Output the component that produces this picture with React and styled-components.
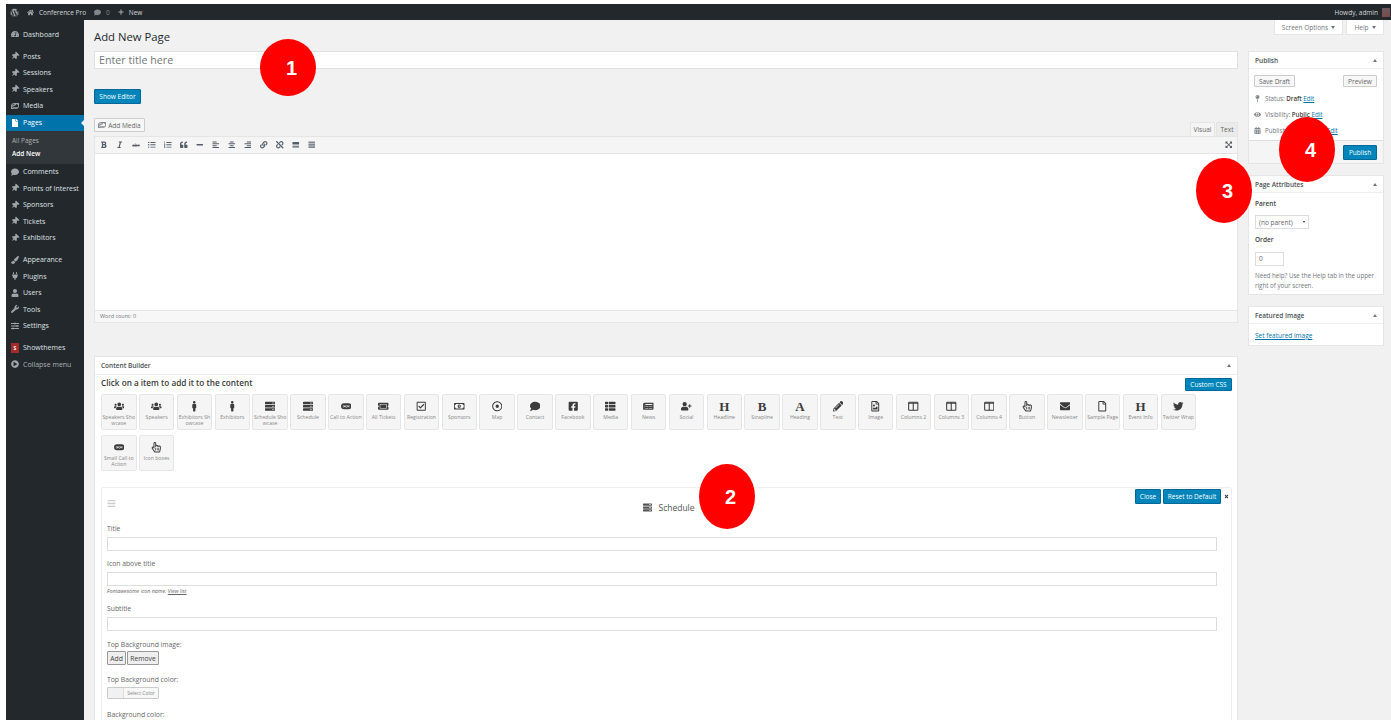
import React from 'react';
import styled, { createGlobalStyle } from 'styled-components';
import {
  FaAlignCenter, FaAlignLeft, FaAlignRight, FaBold, FaCalendarAlt, FaComment, FaEnvelope, FaExpandArrowsAlt,
  FaEye, FaFacebookSquare, FaHome, FaImages, FaItalic, FaLink, FaListOl, FaListUl, FaMale, FaMapPin, FaMinus,
  FaNewspaper, FaPaintBrush, FaPencilAlt, FaPlug, FaPlus, FaQuoteLeft, FaRegCheckSquare, FaRegDotCircle, FaRegFile,
  FaRegFileImage, FaRegHandPointer, FaRegMoneyBillAlt, FaServer, FaSlidersH, FaTachometerAlt,
  FaThList, FaThumbtack, FaTicketAlt, FaTwitter, FaUnlink, FaUser, FaUserPlus, FaUsers, FaWordpress, FaWrench, FaFile,
  FaPlayCircle, FaBars, FaTimes,
} from 'react-icons/fa';

const GlobalStyle = createGlobalStyle`
  html, body {
    margin: 0;
    background: #fff;
    overflow: hidden;
  }
  * {
    box-sizing: border-box;
  }
`;

const Page = styled.div`
  position: relative;
  width: 1391px;
  height: 720px;
  padding: 4px 0 0 6px;
  overflow: hidden;
  display: flex;
  flex-direction: column;
  background: #fff;
  font-family: 'Open Sans', sans-serif;
  color: #444;
`;

const AdminBar = styled.div`
  flex: 0 0 16px;
  display: flex;
  align-items: center;
  padding: 0 1px 0 4px;
  background: #23282d;
  color: #d5d7d9;
  font-size: 6.5px;
`;

const BarItem = styled.span`
  display: inline-flex;
  align-items: center;
  gap: ${p => (p.$tight ? 3 : 5)}px;
  margin-left: ${p => (p.$end ? 'auto' : `${p.$gap || 0}px`)};
  color: ${p => p.$color || 'inherit'};
`;

const Avatar = styled.span`
  width: 8px;
  height: 9px;
  margin-left: -1px;
  background: linear-gradient(#6b5a60, #7d4a4f);
`;

const Body = styled.div`
  flex: 1;
  display: flex;
  min-height: 0;
`;

const Sidebar = styled.nav`
  flex: 0 0 78px;
  padding-top: 6px;
  background: #23282d;
`;

const MenuGroup = styled.div`
  margin-bottom: ${p => p.$gap || 0}px;
`;

const MenuRow = styled.div`
  position: relative;
  height: 16.5px;
  display: flex;
  align-items: center;
  padding-left: 5px;
  gap: 4px;
  font-size: 7px;
  color: ${p => (p.$active ? '#fff' : p.$dim ? '#aab0b5' : '#dfe1e2')};
  background: ${p => (p.$active ? '#0073aa' : 'transparent')};

  svg {
    flex: 0 0 8px;
    width: 8px;
    height: 8px;
    color: ${p => (p.$active ? '#fff' : '#a0a5aa')};
  }
`;

const PinIcon = styled(FaThumbtack)`
  transform: rotate(45deg);
`;

const ActiveNotch = styled.span`
  position: absolute;
  right: 0;
  top: 5px;
  border: 3px solid transparent;
  border-right-color: #f1f1f1;
  border-left-width: 0;
`;

const SubMenu = styled.div`
  height: 32.5px;
  padding: 3px 0 0 6px;
  background: #32373c;
  font-size: 6.5px;
  line-height: 13px;
`;

const SubLink = styled.div`
  color: ${p => (p.$current ? '#fff' : '#aeb2b6')};
  font-weight: ${p => (p.$current ? 600 : 400)};
`;

const BrandMark = styled.span`
  flex: 0 0 8px;
  width: 8px;
  height: 10px;
  background: #a52a2a;
  color: #fff;
  font-size: 5px;
  font-weight: 700;
  text-align: center;
  line-height: 10px;
`;

const Content = styled.main`
  position: relative;
  flex: 1;
  display: flex;
  gap: 10px;
  padding: 9px 7px 0 10px;
  background: #f1f1f1;
  min-width: 0;
`;

const ScreenMeta = styled.div`
  position: absolute;
  top: 0;
  right: 7px;
  display: flex;
  gap: 3px;
`;

const MetaTab = styled.div`
  width: ${p => p.$width}px;
  height: 15px;
  display: flex;
  align-items: center;
  justify-content: center;
  gap: 3px;
  background: #fff;
  border: 1px solid #e5e5e5;
  border-top: 0;
  color: #72777c;
  font-size: 6.5px;

  &::after {
    content: '';
    border: 2px solid transparent;
    border-top: 3px solid #72777c;
    border-bottom: 0;
  }
`;

const MainColumn = styled.div`
  flex: 0 0 1144px;
  width: 1144px;
`;

const SideColumn = styled.aside`
  flex: 0 0 136px;
  padding-top: 22px;
`;

const Heading = styled.h1`
  margin: 0 0 6px;
  font-size: 11.3px;
  line-height: 16px;
  font-weight: 400;
  color: #23282d;
`;

const TitleInput = styled.div`
  height: 18px;
  padding-left: 4px;
  background: #fff;
  border: 1px solid #e0e0e0;
  font-size: 10.7px;
  line-height: 16px;
  color: #72777c;
`;

const PrimaryButton = styled.div`
  display: inline-flex;
  align-items: center;
  justify-content: center;
  width: ${p => p.$width}px;
  height: ${p => p.$height || 15}px;
  margin-top: ${p => p.$top || 0}px;
  background: #0085ba;
  border: 1px solid #006799;
  border-radius: 1px;
  color: #fff;
  font-size: 6.5px;
  white-space: nowrap;
`;

const SoftButton = styled.div`
  display: inline-flex;
  align-items: center;
  justify-content: center;
  gap: 2px;
  width: ${p => p.$width}px;
  height: ${p => p.$height || 14}px;
  background: #f7f7f7;
  border: 1px solid #ccc;
  border-radius: 1px;
  color: #666;
  font-size: 6.5px;

  svg {
    width: 8px;
    height: 8px;
    color: #82878c;
  }
`;

const MediaRow = styled.div`
  height: 18px;
  margin-top: 14px;
  display: flex;
  justify-content: space-between;
`;

const EditorTabs = styled.div`
  display: flex;
  align-items: flex-end;
  gap: 1px;
`;

const EditorTab = styled.div`
  width: ${p => p.$width}px;
  height: 14px;
  display: flex;
  align-items: center;
  justify-content: center;
  background: ${p => (p.$active ? '#f5f5f5' : '#ebebeb')};
  border: 1px solid #e5e5e5;
  border-bottom: 0;
  color: #666;
  font-size: 6.5px;
`;

const EditorPanel = styled.div`
  height: 187px;
  display: flex;
  flex-direction: column;
  border: 1px solid #e5e5e5;
  background: #fff;
`;

const Toolbar = styled.div`
  flex: 0 0 17px;
  display: flex;
  align-items: center;
  padding: 0 0 0 1px;
  background: #f5f5f5;
  border-bottom: 1px solid #e5e5e5;
`;

const ToolButton = styled.span`
  flex: 0 0 16px;
  display: flex;
  justify-content: center;
  margin-left: ${p => (p.$push ? 'auto' : 0)};
  color: #555d66;
  font-size: 4.5px;
  line-height: 7px;

  svg {
    width: 7.5px;
    height: 7.5px;
  }
`;

const EditorArea = styled.div`
  flex: 1;
`;

const WordCount = styled.div`
  flex: 0 0 12px;
  padding-left: 5px;
  background: #f7f7f7;
  border-top: 1px solid #e5e5e5;
  color: #72777c;
  font-size: 5.5px;
  line-height: 11px;
`;

const Builder = styled.section`
  margin-top: 33px;
  height: 420px;
  background: #fff;
  border: 1px solid #e5e5e5;
`;

const PanelHeader = styled.div`
  height: ${p => p.$height || 17}px;
  display: flex;
  align-items: center;
  justify-content: space-between;
  padding: 0 6px;
  border-bottom: 1px solid #eee;
  color: #4a4f54;
  font-size: 6.5px;
  font-weight: 600;

  &::after {
    content: '';
    border: 2px solid transparent;
    border-bottom: 3px solid #72777c;
    border-top: 0;
  }
`;

const BuilderBody = styled.div`
  padding: 3px 5px 0 6px;
`;

const PromptRow = styled.div`
  display: flex;
  align-items: center;
  justify-content: space-between;
  height: 13px;
`;

const Prompt = styled.div`
  font-size: 8.2px;
  font-weight: 600;
  color: #3a3a3a;
  position: relative;
  top: -2px;
`;

const Tiles = styled.div`
  display: flex;
  flex-wrap: wrap;
  gap: 5px 2.35px;
  margin-top: 3px;
  height: 77px;
`;

const TileBox = styled.div`
  width: 35.5px;
  height: 36px;
  padding-top: 6px;
  display: flex;
  flex-direction: column;
  align-items: center;
  background: #f5f5f5;
  border: 1px solid #e6e6e6;
  border-radius: 2px;
  color: #888;
  font-size: 5.2px;
  line-height: 5.5px;
  text-align: center;
  word-break: break-all;
`;

const TileIcon = styled.span`
  height: 11px;
  margin-bottom: 3px;
  display: flex;
  align-items: center;
  color: #3c3c3c;
  font-family: 'Liberation Serif', serif;
  font-size: 13px;
  font-weight: 700;

  svg {
    width: 10.5px;
    height: 10.5px;
  }
`;

const Card = styled.div`
  margin-top: 16px;
  height: 240px;
  padding: 0 14px 0 5px;
  border: 1px solid #eee;
  border-radius: 2px;
  background: #fff;
`;

const CardHeader = styled.div`
  height: 36px;
  margin-right: -14px;
  display: grid;
  grid-template-columns: 1fr auto 1fr;
`;

const DragHandle = styled.span`
  padding-top: 3px;
  color: #ccc;

  svg {
    width: 9px;
    height: 9px;
  }
`;

const CardTitle = styled.div`
  display: flex;
  align-items: center;
  gap: 6px;
  padding-top: 2px;
  color: #555;
  font-size: 8.5px;

  svg {
    width: 9px;
    height: 9px;
    color: #555;
  }
`;

const CardActions = styled.div`
  display: flex;
  justify-content: flex-end;
  gap: 2px;
  padding: 1px 2px 0 0;
  color: #333;

  svg {
    width: 5px;
    height: 5px;
    margin: 5px 0 0 1px;
  }
`;

const FieldLabel = styled.div`
  height: 10px;
  margin-top: ${p => p.$top || 0}px;
  color: #666;
  font-size: 6.8px;
  line-height: 10px;
`;

const FieldInput = styled.div`
  height: 14px;
  margin-top: 3px;
  background: #fff;
  border: 1px solid #ddd;
`;

const FieldNote = styled.div`
  height: 10px;
  color: #666;
  font-size: 5.3px;
  font-style: italic;
  line-height: 10px;

  a {
    color: inherit;
  }
`;

const FieldButtons = styled.div`
  display: flex;
  gap: 1px;
  margin-top: 1px;
`;

const GreyButton = styled.div`
  width: ${p => p.$width}px;
  height: 14px;
  display: flex;
  align-items: center;
  justify-content: center;
  background: #eee;
  border: 1px solid #999;
  border-radius: 1px;
  color: #444;
  font-size: 6.8px;
`;

const ColorPicker = styled.div`
  display: flex;
  width: 52px;
  height: 12px;
  margin-top: 2px;
  border: 1px solid #ccc;
  border-radius: 1px;
  background: #f7f7f7;
  color: #888;
  font-size: 5px;
  line-height: 10px;
`;

const ColorSwatch = styled.span`
  flex: 0 0 16px;
  background: #f1f1f1;
  border-right: 1px solid #ddd;
`;

const ColorLabel = styled.span`
  flex: 1;
  text-align: center;
`;

const SidePanel = styled.section`
  margin-bottom: 11px;
  background: #fff;
  border: 1px solid #e5e5e5;
`;

const PanelBody = styled.div`
  padding: ${p => p.$padding || '6px'};
`;

const PublishButtons = styled.div`
  display: flex;
  justify-content: space-between;
  margin-bottom: 3px;
`;

const StatusRow = styled.div`
  height: 16px;
  display: flex;
  align-items: center;
  gap: 4px;
  color: #72777c;
  font-size: 6.2px;

  svg {
    flex: 0 0 7px;
    width: 7px;
    height: 7px;
    color: #82878c;
  }

  b {
    font-weight: 600;
    color: #444;
  }
`;

const EditLink = styled.a`
  color: #0073aa;
  text-decoration: underline;
`;

const ImageLink = styled(EditLink)`
  display: block;
  font-size: 6.5px;
  line-height: 10px;
`;

const PublishFooter = styled.div`
  height: 23px;
  display: flex;
  justify-content: flex-end;
  align-items: center;
  padding-right: 6px;
  background: #f5f5f5;
  border-top: 1px solid #ddd;
`;

const AttrLabel = styled.div`
  height: 10px;
  margin-top: ${p => p.$top || 0}px;
  color: #444;
  font-size: 6.5px;
  font-weight: 600;
  line-height: 10px;
`;

const SelectBox = styled.div`
  width: 54px;
  height: 14px;
  margin-top: 6px;
  display: flex;
  align-items: center;
  justify-content: space-between;
  padding: 0 3px;
  background: #fff;
  border: 1px solid #ddd;
  color: #666;
  font-size: 6.5px;

  &::after {
    content: '';
    border: 1.5px solid transparent;
    border-top: 2px solid #333;
    border-bottom: 0;
  }
`;

const NumberBox = styled.div`
  width: 29px;
  height: 14px;
  margin-top: 7px;
  padding-left: 3px;
  background: #fff;
  border: 1px solid #ddd;
  color: #666;
  font-size: 6.5px;
  line-height: 12px;
`;

const HelpText = styled.p`
  margin: 5px 0 0;
  color: #72777c;
  font-size: 6.2px;
  line-height: 10px;
`;

const Marker = styled.div`
  position: absolute;
  left: ${p => p.$x}px;
  top: ${p => p.$y}px;
  width: ${p => p.$w}px;
  height: ${p => p.$h}px;
  padding: 2px 0 0 7px;
  display: flex;
  align-items: center;
  justify-content: center;
  border-radius: 50%;
  background: #ff0000;
  color: #fff;
  font-family: 'Liberation Sans', sans-serif;
  font-size: 20px;
  font-weight: 700;
`;

const RingsIcon = () => (
  <svg viewBox="0 0 24 16" fill="none" stroke="currentColor" strokeWidth="4">
    <rect x="2" y="3" width="20" height="10" rx="5" />
    <circle cx="9" cy="8" r="3" strokeWidth="2" />
    <circle cx="16" cy="8" r="3" strokeWidth="2" />
  </svg>
);

const ColumnsIcon = () => (
  <svg viewBox="0 0 16 16" fill="none" stroke="currentColor" strokeWidth="1.6">
    <rect x="1" y="2" width="14" height="12" rx="1" />
    <path d="M8 2v12M1 3.5h14" />
  </svg>
);

const MoreIcon = () => (
  <svg viewBox="0 0 16 16" fill="currentColor">
    <path d="M1 2h14v5H1zM1 8h14v1H1zM1 11h14v3H1z" />
  </svg>
);

const KitchenIcon = () => (
  <svg viewBox="0 0 16 16" fill="#82878c">
    <path d="M1 1h14v4H1zM1 6h14v4H1zM1 11h14v4H1z" />
  </svg>
);

const menuGroups = [
  { gap: 5.5, items: [{ label: 'Dashboard', icon: <FaTachometerAlt /> }] },
  {
    gap: 0.5,
    items: [
      { label: 'Posts', icon: <PinIcon /> },
      { label: 'Sessions', icon: <PinIcon /> },
      { label: 'Speakers', icon: <PinIcon /> },
      { label: 'Media', icon: <FaImages /> },
    ],
  },
];

const menuAfterPages = [
  {
    gap: 5.5,
    items: [
      { label: 'Comments', icon: <FaComment /> },
      { label: 'Points of Interest', icon: <PinIcon /> },
      { label: 'Sponsors', icon: <PinIcon /> },
      { label: 'Tickets', icon: <PinIcon /> },
      { label: 'Exhibitors', icon: <PinIcon /> },
    ],
  },
  {
    gap: 5.5,
    items: [
      { label: 'Appearance', icon: <FaPaintBrush /> },
      { label: 'Plugins', icon: <FaPlug /> },
      { label: 'Users', icon: <FaUser /> },
      { label: 'Tools', icon: <FaWrench /> },
      { label: 'Settings', icon: <FaSlidersH /> },
    ],
  },
];

const tools = [
  <FaBold key="b" />, <FaItalic key="i" />, <s key="s">abc</s>, <FaListUl key="ul" />, <FaListOl key="ol" />,
  <FaQuoteLeft key="q" />, <FaMinus key="hr" />, <FaAlignLeft key="al" />, <FaAlignCenter key="ac" />,
  <FaAlignRight key="ar" />, <FaLink key="l" />, <FaUnlink key="u" />, <MoreIcon key="m" />, <KitchenIcon key="k" />,
];

const tiles = [
  ['Speakers Showcase', <FaUsers />],
  ['Speakers', <FaUsers />],
  ['Exhibitors Showcase', <FaMale />],
  ['Exhibitors', <FaMale />],
  ['Schedule Showcase', <FaServer />],
  ['Schedule', <FaServer />],
  ['Call to Action', <RingsIcon />],
  ['All Tickets', <FaTicketAlt />],
  ['Registration', <FaRegCheckSquare />],
  ['Sponsors', <FaRegMoneyBillAlt />],
  ['Map', <FaRegDotCircle />],
  ['Contact', <FaComment />],
  ['Facebook', <FaFacebookSquare />],
  ['Media', <FaThList />],
  ['News', <FaNewspaper />],
  ['Social', <FaUserPlus />],
  ['Headline', 'H'],
  ['Strapline', 'B'],
  ['Heading', 'A'],
  ['Text', <FaPencilAlt />],
  ['Image', <FaRegFileImage />],
  ['Columns 2', <ColumnsIcon />],
  ['Columns 3', <ColumnsIcon />],
  ['Columns 4', <ColumnsIcon />],
  ['Button', <FaRegHandPointer />],
  ['Newsletter', <FaEnvelope />],
  ['Sample Page', <FaRegFile />],
  ['Event Info', 'H'],
  ['Twitter Wrap', <FaTwitter />],
  ['Small Call to Action', <RingsIcon />],
  ['Icon boxes', <FaRegHandPointer />],
];

const markers = [
  { n: 1, x: 260, y: 39, w: 56, h: 57 },
  { n: 2, x: 699, y: 464, w: 56, h: 65 },
  { n: 3, x: 1196, y: 158, w: 56, h: 65 },
  { n: 4, x: 1279, y: 117, w: 56, h: 65 },
];

const MenuItems = ({ groups }) =>
  groups.map(group => (
    <MenuGroup key={group.items[0].label} $gap={group.gap}>
      {group.items.map(item => (
        <MenuRow key={item.label}>
          {item.icon}
          {item.label}
        </MenuRow>
      ))}
    </MenuGroup>
  ));

const AdminMenu = () => (
  <Sidebar>
    <MenuItems groups={menuGroups} />
    <MenuRow $active>
      <FaFile />
      Pages
      <ActiveNotch />
    </MenuRow>
    <SubMenu>
      <SubLink>All Pages</SubLink>
      <SubLink $current>Add New</SubLink>
    </SubMenu>
    <MenuItems groups={menuAfterPages} />
    <MenuRow>
      <BrandMark>S</BrandMark>
      Showthemes
    </MenuRow>
    <MenuRow $dim>
      <FaPlayCircle />
      Collapse menu
    </MenuRow>
  </Sidebar>
);

const Editor = () => (
  <>
    <MediaRow>
      <SoftButton $width={51}>
        <FaImages />
        Add Media
      </SoftButton>
      <EditorTabs>
        <EditorTab $width={25} $active>Visual</EditorTab>
        <EditorTab $width={22}>Text</EditorTab>
      </EditorTabs>
    </MediaRow>
    <EditorPanel>
      <Toolbar>
        {tools.map(tool => (
          <ToolButton key={tool.key}>{tool}</ToolButton>
        ))}
        <ToolButton $push>
          <FaExpandArrowsAlt />
        </ToolButton>
      </Toolbar>
      <EditorArea />
      <WordCount>Word count: 0</WordCount>
    </EditorPanel>
  </>
);

const ScheduleCard = () => (
  <Card>
    <CardHeader>
      <DragHandle>
        <FaBars />
      </DragHandle>
      <CardTitle>
        <FaServer />
        Schedule
      </CardTitle>
      <CardActions>
        <PrimaryButton $width={26}>Close</PrimaryButton>
        <PrimaryButton $width={58}>Reset to Default</PrimaryButton>
        <FaTimes />
      </CardActions>
    </CardHeader>
    <FieldLabel>Title</FieldLabel>
    <FieldInput />
    <FieldLabel $top={8}>Icon above title</FieldLabel>
    <FieldInput />
    <FieldNote>
      Fontawesome icon name. <a href="#list">View list</a>
    </FieldNote>
    <FieldLabel $top={8}>Subtitle</FieldLabel>
    <FieldInput />
    <FieldLabel $top={9}>Top Background image:</FieldLabel>
    <FieldButtons>
      <GreyButton $width={19}>Add</GreyButton>
      <GreyButton $width={32}>Remove</GreyButton>
    </FieldButtons>
    <FieldLabel $top={10}>Top Background color:</FieldLabel>
    <ColorPicker>
      <ColorSwatch />
      <ColorLabel>Select Color</ColorLabel>
    </ColorPicker>
    <FieldLabel $top={11}>Background color:</FieldLabel>
  </Card>
);

const SidePanels = () => (
  <SideColumn>
    <SidePanel>
      <PanelHeader>Publish</PanelHeader>
      <PanelBody $padding="6px 6px 2px 5px">
        <PublishButtons>
          <SoftButton $width={41} $height={12}>Save Draft</SoftButton>
          <SoftButton $width={34} $height={12}>Preview</SoftButton>
        </PublishButtons>
        <StatusRow>
          <FaMapPin />
          <span>Status: <b>Draft</b> <EditLink href="#status">Edit</EditLink></span>
        </StatusRow>
        <StatusRow>
          <FaEye />
          <span>Visibility: <b>Public</b> <EditLink href="#visibility">Edit</EditLink></span>
        </StatusRow>
        <StatusRow>
          <FaCalendarAlt />
          <span>Publish <b>immediately</b> <EditLink href="#date">Edit</EditLink></span>
        </StatusRow>
      </PanelBody>
      <PublishFooter>
        <PrimaryButton $width={34}>Publish</PrimaryButton>
      </PublishFooter>
    </SidePanel>
    <SidePanel>
      <PanelHeader>Page Attributes</PanelHeader>
      <PanelBody $padding="6px 6px 3px">
        <AttrLabel>Parent</AttrLabel>
        <SelectBox>(no parent)</SelectBox>
        <AttrLabel $top={6}>Order</AttrLabel>
        <NumberBox>0</NumberBox>
        <HelpText>Need help? Use the Help tab in the upper right of your screen.</HelpText>
      </PanelBody>
    </SidePanel>
    <SidePanel>
      <PanelHeader>Featured Image</PanelHeader>
      <PanelBody $padding="7px 6px 4px">
        <ImageLink href="#image">Set featured image</ImageLink>
      </PanelBody>
    </SidePanel>
  </SideColumn>
);

export default function App() {
  return (
    <Page>
      <GlobalStyle />
      <AdminBar>
        <FaWordpress size={9} color="#a0a5aa" />
        <BarItem $gap={8}><FaHome size={7} color="#a0a5aa" />Conference Pro</BarItem>
        <BarItem $gap={8} $color="#82878c"><FaComment size={7} />0</BarItem>
        <BarItem $gap={8}><FaPlus size={6} color="#a0a5aa" />New</BarItem>
        <BarItem $end>Howdy, admin<Avatar /></BarItem>
      </AdminBar>
      <Body>
        <AdminMenu />
        <Content>
          <ScreenMeta>
            <MetaTab $width={69}>Screen Options</MetaTab>
            <MetaTab $width={38}>Help</MetaTab>
          </ScreenMeta>
          <MainColumn>
            <Heading>Add New Page</Heading>
            <TitleInput>Enter title here</TitleInput>
            <PrimaryButton $width={47} $top={20}>Show Editor</PrimaryButton>
            <Editor />
            <Builder>
              <PanelHeader $height={18}>Content Builder</PanelHeader>
              <BuilderBody>
                <PromptRow>
                  <Prompt>Click on a item to add it to the content</Prompt>
                  <PrimaryButton $width={47} $height={13}>Custom CSS</PrimaryButton>
                </PromptRow>
                <Tiles>
                  {tiles.map(([label, icon]) => (
                    <TileBox key={label}>
                      <TileIcon>{icon}</TileIcon>
                      {label}
                    </TileBox>
                  ))}
                </Tiles>
                <ScheduleCard />
              </BuilderBody>
            </Builder>
          </MainColumn>
          <SidePanels />
        </Content>
      </Body>
      {markers.map(m => (
        <Marker key={m.n} $x={m.x} $y={m.y} $w={m.w} $h={m.h}>{m.n}</Marker>
      ))}
    </Page>
  );
}
